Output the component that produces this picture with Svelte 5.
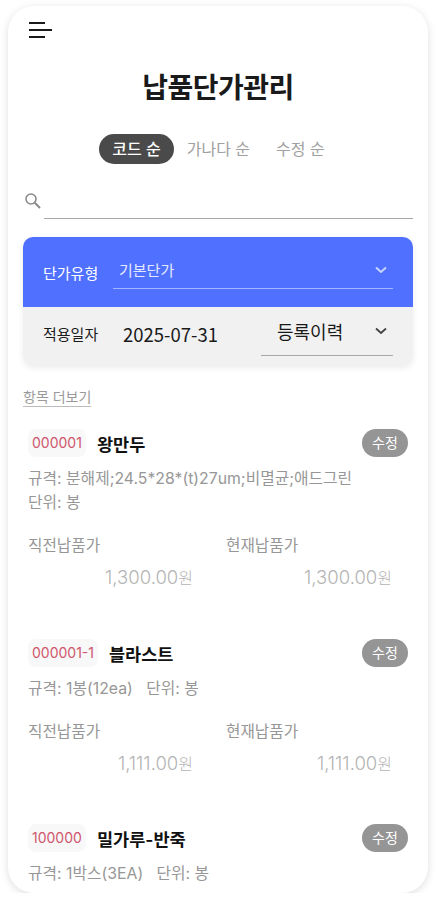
<script>
    const tabs = ['코드 순', '가나다 순', '수정 순'];
    const items = [
        { code: '000001', name: '왕만두', spec: ['규격: 분해제;24.5*28*(t)27um;비멸균;애드그린', '단위: 봉'], prev: '1,300.00', cur: '1,300.00', tall: true },
        { code: '000001-1', name: '블라스트', spec: ['규격: 1봉(12ea)\u00a0\u00a0\u00a0단위: 봉'], prev: '1,111.00', cur: '1,111.00' },
        { code: '100000', name: '밀가루-반죽', spec: ['규격: 1박스(3EA)\u00a0\u00a0\u00a0단위: 봉'] },
    ];
</script>

<div class="frame">
    <header>
        <button class="menu" aria-label="메뉴">
            <span class="l1"></span>
            <span class="l2"></span>
            <span class="l3"></span>
        </button>
    </header>

    <h1>납품단가관리</h1>

    <div class="tabs">
        {#each tabs as tab, i}
            <span class="tab" class:active={i === 0}>{tab}</span>
        {/each}
    </div>

    <div class="search">
        <svg width="18" height="18" viewBox="0 0 18 18" fill="none" stroke="#8a8a8a">
            <circle cx="7" cy="7" r="5" stroke-width="1.6" />
            <path d="M10.8 10.8 16 16" stroke-width="2" />
        </svg>
        <div class="search-line"></div>
    </div>

    <section class="filter">
        <div class="row blue">
            <span class="label">단가유형</span>
            <div class="select">
                <span>기본단가</span>
                <svg width="12" height="8" viewBox="0 0 12 8" fill="none" stroke="#c9d4ff" stroke-width="2"><path d="M1 1.5 6 6 11 1.5" /></svg>
            </div>
        </div>
        <div class="row gray">
            <span class="label">적용일자</span>
            <span class="date">2025-07-31</span>
            <div class="history">
                <span>등록이력</span>
                <svg width="12" height="8" viewBox="0 0 12 8" fill="none" stroke="#444" stroke-width="1.8"><path d="M1 1.5 6 6 11 1.5" /></svg>
            </div>
        </div>
    </section>

    <div class="more"><span>항목 더보기</span></div>

    {#each items as item}
        <article class:tall={item.tall}>
            <div class="title">
                <span class="code">{item.code}</span>
                <strong>{item.name}</strong>
                <span class="edit">수정</span>
            </div>
            <div class="spec">
                {#each item.spec as line}
                    <div>{line}</div>
                {/each}
            </div>
            {#if item.prev}
                <div class="prices">
                    <div>
                        <div class="price-label">직전납품가</div>
                        <div class="price">{item.prev}<small>원</small></div>
                    </div>
                    <div>
                        <div class="price-label">현재납품가</div>
                        <div class="price">{item.cur}<small>원</small></div>
                    </div>
                </div>
            {/if}
        </article>
    {/each}
</div>

<style>
    :global(body) {
        background: #fff;
        font-family: Inter, 'Noto Sans CJK KR', sans-serif;
    }

    .frame {
        box-sizing: border-box;
        width: 420px;
        height: 887px;
        margin: 6px 8px 0;
        border-radius: 26px;
        background: #fff;
        box-shadow: 0 2px 8px rgba(0, 0, 0, 0.13);
        overflow: hidden;
    }

    header {
        padding: 16px 21px 0;
        height: 29px;
    }
    .menu {
        all: unset;
        display: flex;
        flex-direction: column;
        gap: 5px;
        width: 23px;
    }
    .menu span {
        display: block;
        height: 2px;
        background: #1a1a1a;
    }
    .l1,
    .l3 {
        width: 16px;
    }
    .l2 {
        width: 23px;
    }

    h1 {
        margin: 18px 0 0;
        font-size: 28px;
        line-height: 38px;
        font-weight: 700;
        letter-spacing: -0.5px;
        text-align: center;
        color: #1a1a1a;
    }

    .tabs {
        display: flex;
        justify-content: center;
        margin: 27px 0 0 1px;
    }
    .tab {
        padding: 0 13px;
        font-size: 16px;
        line-height: 30px;
        color: #a0a0a0;
    }
    .tab.active {
        background: #4a4a4a;
        color: #fff;
        font-weight: 500;
        border-radius: 15px;
    }

    .search {
        display: flex;
        align-items: flex-start;
        margin: 27px 15px 0 16px;
    }
    .search svg {
        margin-top: 1px;
    }
    .search-line {
        flex: 1;
        height: 27px;
        margin-left: 2px;
        border-bottom: 1px solid #a8a8a8;
    }

    .filter {
        margin: 18px 15px 0;
        border-radius: 10px;
        overflow: hidden;
        box-shadow: 0 2px 6px rgba(0, 0, 0, 0.08);
    }
    .row {
        display: flex;
        padding: 0 20px;
    }
    .label {
        width: 70px;
        flex: none;
        font-size: 15px;
    }
    .blue {
        height: 70px;
        background: #5070ff;
        color: #fff;
    }
    .blue .label {
        line-height: 74px;
    }
    .select {
        flex: 1;
        display: flex;
        align-items: center;
        justify-content: space-between;
        height: 52px;
        padding: 14px 6px 0 6px;
        box-sizing: border-box;
        border-bottom: 1px solid #a3b5ff;
        font-size: 15px;
        color: #e4e9ff;
    }
    .gray {
        height: 59px;
        background: #f1f1f1;
        color: #1a1a1a;
    }
    .gray .label {
        line-height: 56px;
    }
    .date {
        width: 148px;
        padding-left: 10px;
        flex: none;
        box-sizing: border-box;
        font-family: 'Noto Sans CJK KR', sans-serif;
        font-size: 18.5px;
        line-height: 55px;
    }
    .history {
        flex: 1;
        display: flex;
        align-items: center;
        justify-content: space-between;
        height: 48px;
        padding: 0 6px 0 16px;
        border-bottom: 1.5px solid #a8a8a8;
        font-size: 18px;
    }

    .more {
        margin: 22px 15px 0;
        font-size: 14px;
        line-height: 18px;
        color: #9a9a9a;
    }
    .more span {
        display: inline-block;
        border-bottom: 1.5px solid #bbb;
    }

    article {
        padding: 22px 20px 0;
        height: 185px;
        box-sizing: border-box;
    }
    article.tall {
        height: 210px;
    }

    .title {
        display: flex;
        align-items: center;
        height: 28px;
    }
    .code {
        padding: 0 4px;
        min-width: 50px;
        font-size: 14px;
        line-height: 28px;
        color: #cf566c;
        background: #f8f8f8;
        border-radius: 8px;
    }
    .title strong {
        margin-left: 11px;
        font-size: 17.5px;
        font-weight: 600;
        color: #111;
    }
    .edit {
        margin-left: auto;
        width: 46px;
        font-size: 14px;
        line-height: 28px;
        text-align: center;
        color: #fff;
        background: #959595;
        border-radius: 14px;
    }

    .spec {
        margin-top: 10px;
        font-size: 15.8px;
        line-height: 24px;
        color: #979797;
    }

    .prices {
        display: grid;
        grid-template-columns: 198px 166px;
        margin-top: 20px;
    }
    .price-label {
        font-size: 15.7px;
        line-height: 22px;
        color: #979797;
    }
    .price {
        margin-top: 8px;
        font-size: 18.5px;
        font-weight: 300;
        line-height: 24px;
        text-align: right;
        color: #b4b4b4;
    }
    .prices > div:first-child .price {
        margin-right: 33px;
    }
    .price small {
        font-size: 16px;
    }
</style>
